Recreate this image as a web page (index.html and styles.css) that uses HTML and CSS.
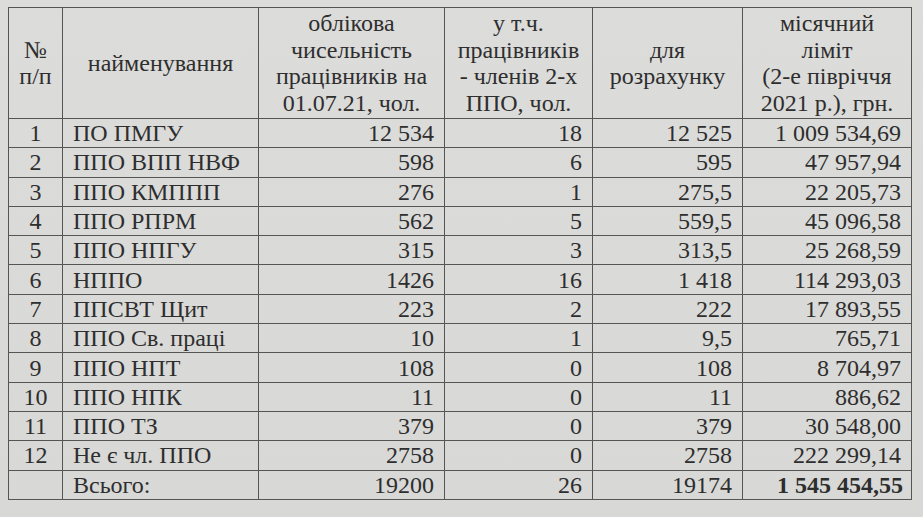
FILE: index.html
```html
<!DOCTYPE html>
<html lang="uk">
<head>
<meta charset="utf-8">
<link rel="stylesheet" href="styles.css">
</head>
<body>
<table class="limits">
  <colgroup>
    <col class="c-num"><col class="c-name"><col class="c-staff"><col class="c-members"><col class="c-calc"><col class="c-limit">
  </colgroup>
  <thead>
    <tr>
      <th>№<br>п/п</th>
      <th>найменування</th>
      <th>облікова<br>чисельність<br>працівників на<br>01.07.21, чол.</th>
      <th>у т.ч.<br>працівників<br>- членів 2-х<br>ППО, чол.</th>
      <th>для<br>розрахунку</th>
      <th>місячний<br>ліміт<br>(2-е півріччя<br>2021 р.), грн.</th>
    </tr>
  </thead>
  <tbody>
    <tr><td class="n">1</td><td class="t">ПО ПМГУ</td><td class="r">12 534</td><td class="r">18</td><td class="r">12 525</td><td class="r">1 009 534,69</td></tr>
    <tr><td class="n">2</td><td class="t">ППО ВПП НВФ</td><td class="r">598</td><td class="r">6</td><td class="r">595</td><td class="r">47 957,94</td></tr>
    <tr><td class="n">3</td><td class="t">ППО КМППП</td><td class="r">276</td><td class="r">1</td><td class="r">275,5</td><td class="r">22 205,73</td></tr>
    <tr><td class="n">4</td><td class="t">ППО РПРМ</td><td class="r">562</td><td class="r">5</td><td class="r">559,5</td><td class="r">45 096,58</td></tr>
    <tr><td class="n">5</td><td class="t">ППО НПГУ</td><td class="r">315</td><td class="r">3</td><td class="r">313,5</td><td class="r">25 268,59</td></tr>
    <tr><td class="n">6</td><td class="t">НППО</td><td class="r">1426</td><td class="r">16</td><td class="r">1 418</td><td class="r">114 293,03</td></tr>
    <tr><td class="n">7</td><td class="t">ППСВТ Щит</td><td class="r">223</td><td class="r">2</td><td class="r">222</td><td class="r">17 893,55</td></tr>
    <tr><td class="n">8</td><td class="t">ППО Св. праці</td><td class="r">10</td><td class="r">1</td><td class="r">9,5</td><td class="r">765,71</td></tr>
    <tr><td class="n">9</td><td class="t">ППО НПТ</td><td class="r">108</td><td class="r">0</td><td class="r">108</td><td class="r">8 704,97</td></tr>
    <tr><td class="n">10</td><td class="t">ППО НПК</td><td class="r">11</td><td class="r">0</td><td class="r">11</td><td class="r">886,62</td></tr>
    <tr><td class="n">11</td><td class="t">ППО ТЗ</td><td class="r">379</td><td class="r">0</td><td class="r">379</td><td class="r">30 548,00</td></tr>
    <tr><td class="n">12</td><td class="t">Не є чл. ППО</td><td class="r">2758</td><td class="r">0</td><td class="r">2758</td><td class="r">222 299,14</td></tr>
    <tr><td class="n"></td><td class="t">Всього:</td><td class="r">19200</td><td class="r">26</td><td class="r">19174</td><td class="r total">1 545 454,55</td></tr>
  </tbody>
</table>
</body>
</html>
```

FILE: styles.css
```css
html, body {
  margin: 0;
  height: 100%;
}
body {
  padding: 7px 0 0 8px;
  box-sizing: border-box;
  background: linear-gradient(180deg, #dcdcda 0%, #d8d8d6 100%);
  font-family: "Liberation Serif", "Times New Roman", serif;
  font-size: 24px;
  color: #2e2e2e;
  overflow: hidden;
}
.limits {
  border-collapse: collapse;
  table-layout: fixed;
  width: 903px;
}
.c-num { width: 54px; }
.c-name { width: 196px; }
.c-staff { width: 186px; }
.c-members { width: 148px; }
.c-calc { width: 150px; }
.c-limit { width: 169px; }
.limits th, .limits td {
  border: 1.5px solid #555;
  padding: 0 10px;
  white-space: nowrap;
}
.limits th {
  font-weight: normal;
  text-align: center;
  vertical-align: middle;
  line-height: 26.5px;
  height: 110px;
  padding: 0 4px;
}
.limits td {
  height: 28.3px;
  line-height: 28px;
}
.limits td.n {
  text-align: center;
  padding: 0;
}
.limits td.t {
  text-align: left;
}
.limits td.r {
  text-align: right;
}
.limits td.total {
  font-weight: bold;
  padding-right: 8px;
}
```
